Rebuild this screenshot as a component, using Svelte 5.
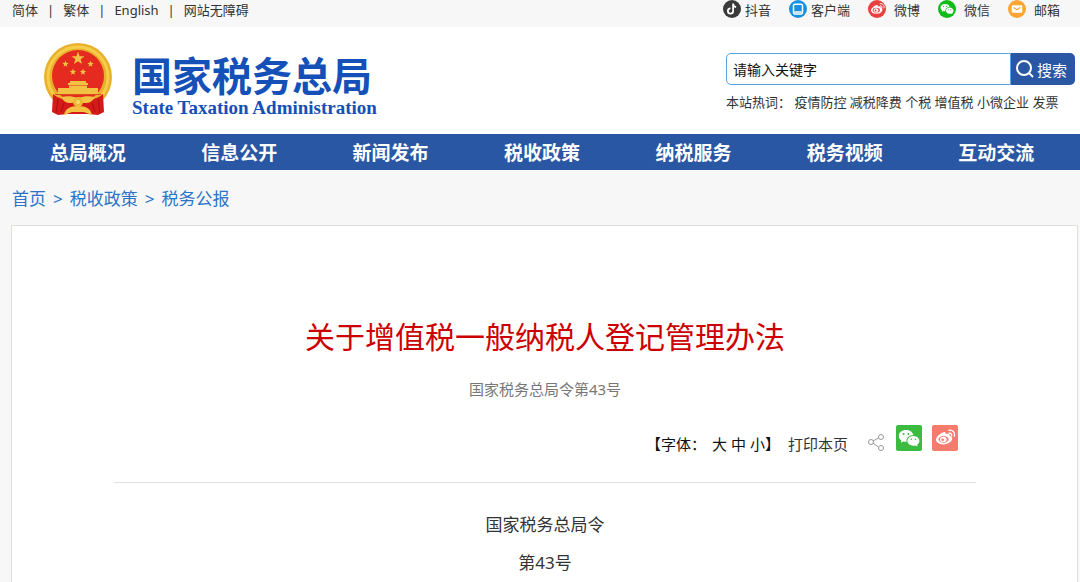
<script lang="ts">
  const languages = ['简体', '繁体', 'English', '网站无障碍'];

  const services = [
    { icon: 'douyin', label: '抖音' },
    { icon: 'app', label: '客户端' },
    { icon: 'weibo', label: '微博' },
    { icon: 'wechat', label: '微信' },
    { icon: 'mail', label: '邮箱' }
  ];

  const hotWords = ['疫情防控', '减税降费', '个税', '增值税', '小微企业', '发票'];

  const menu = ['总局概况', '信息公开', '新闻发布', '税收政策', '纳税服务', '税务视频', '互动交流'];

  const crumbs = ['首页', '税收政策', '税务公报'];

  const fontSizes = [
    { label: '大', px: 19 },
    { label: '中', px: 17 },
    { label: '小', px: 15 }
  ];

  let keyword = $state('请输入关键字');
  let bodySize = $state(17);
</script>

{#snippet wechatMark()}
  <path
    fill="#fff"
    fill-rule="evenodd"
    d="M10 5C5.8 5 2.8 7.6 2.8 10.9c0 1.9 1 3.5 2.6 4.6l-.7 2.3 2.7-1.4c.8.2 1.6.4 2.6.4h.6c-.8-4 2.7-6.9 6.7-6.9C16.7 7 13.7 5 10 5zM7.6 7.900a1 1 0 1 1 0 2 1 1 0 0 1 0-2zM12.4 7.900a1 1 0 1 1 0 2 1 1 0 0 1 0-2z"
  />
  <path
    fill="#fff"
    fill-rule="evenodd"
    d="M17.4 10.9c-3.4 0-6 2.200-6 4.900s2.600 4.900 6 4.900c.7 0 1.400-.1 2.100-.3l2.200 1.200-.6-1.900c1.400-.9 2.300-2.300 2.300-3.900 0-2.700-2.700-4.900-6-4.900zM15.4 13.500a.8.8 0 1 1 0 1.600.8.8 0 0 1 0-1.600zM19.4 13.500a.8.8 0 1 1 0 1.600.8.8 0 0 1 0-1.600z"
  />
{/snippet}

{#snippet weiboMark(inner: string)}
  <path
    fill="#fff"
    d="M10.4 7.2c1.5-.6 2.700-.1 2.300 1.900 2.300-.9 4.500-.6 3.900 1.600 1.700.6 2.600 1.600 2.600 2.900 0 3.200-4.100 5.800-8.700 5.800S3 17.200 3 14.500c0-2.600 4.200-6.300 7.400-7.300z"
  />
  <ellipse cx="10.600" cy="14.300" rx="5" ry="3.400" fill={inner} />
  <ellipse cx="10.300" cy="14.400" rx="3.300" ry="2.700" fill="#fff" />
  <circle cx="9.700" cy="14.800" r="1.300" fill={inner} />
  <path
    d="M16.300 8.300c1.500-.3 2.700.9 2.300 2.500M16 5.200c3.600-.6 6.400 2.300 5.500 6"
    fill="none"
    stroke="#fff"
    stroke-width="1.400"
    stroke-linecap="round"
  />
{/snippet}

<div class="page">
  <div class="topbar">
    <ul class="languages">
      {#each languages as language}
        <li><a href="#top">{language}</a></li>
      {/each}
    </ul>
    <ul class="services">
      {#each services as service}
        <li>
          <a href="#top">
            <svg class="service-icon" viewBox="0 0 24 24" aria-hidden="true">
              {#if service.icon === 'douyin'}
                <circle cx="12" cy="12" r="12" fill="#3a3a3a" />
                <path
                  d="M13.5 4.500v10.100a3.500 3.500 0 1 1-3.500-3.500M13.500 5.500c.3 2.300 1.900 3.700 4 3.900"
                  fill="none"
                  stroke="#fff"
                  stroke-width="2.400"
                />
              {:else if service.icon === 'app'}
                <circle cx="12" cy="12" r="12" fill="#1791e0" />
                <rect x="6" y="5.500" width="12" height="13" rx="2" fill="none" stroke="#fff" stroke-width="2" />
                <path d="M7 16h10" stroke="#fff" stroke-width="2" />
              {:else if service.icon === 'weibo'}
                <circle cx="12" cy="12" r="12" fill="#e9403f" />
                <g transform="translate(1 0) scale(0.950)">{@render weiboMark('#e9403f')}</g>
              {:else if service.icon === 'wechat'}
                <circle cx="12" cy="12" r="12" fill="#0fbb16" />
                <g transform="translate(1 1) scale(0.840)">{@render wechatMark()}</g>
              {:else}
                <circle cx="12" cy="12" r="12" fill="#fda532" />
                <rect x="5" y="7" width="14" height="10" rx="1.500" fill="#fff" />
                <path d="M7.500 10l4.500 3 4.500-3" fill="none" stroke="#fda532" stroke-width="1.500" />
              {/if}
            </svg>
            {service.label}
          </a>
        </li>
      {/each}
    </ul>
  </div>

  <header class="header">
    <a class="brand" href="#top">
      <svg class="emblem" viewBox="0 0 70 74" aria-hidden="true">
        <circle cx="34" cy="34" r="34" fill="#e9b02c" />
        <circle cx="34" cy="34" r="30" fill="none" stroke="#f6cd4a" stroke-width="3" />
        <circle cx="34" cy="33" r="26" fill="#e52b20" />
        <g fill="#f2c243">
          <path d="M34 8.500l1.600 4.700 4.900.1-3.900 3 1.400 4.700-4-2.800-4 2.800 1.400-4.700-3.900-3 4.900-.1z" />
          <path id="star" d="M21.500 17.500l.8 2.300 2.400.1-1.900 1.500.7 2.300-2-1.300-2 1.300.7-2.300-1.900-1.500 2.400-.1z" />
          <use href="#star" x="25" />
          <use href="#star" x="7.500" y="8" />
          <use href="#star" x="17.500" y="8" />
          <path d="M26 38h16v2h2v2H24v-2h2zM25 42.500h18v2.500h11v6H14v-6h11z" />
        </g>
        <path d="M11 51.500h46" stroke="#dc4a20" />
        <path d="M9 51c6 5 12 6 18 5l7 6 7-6c6 1 12 0 18-5l1 18-6 3-10-1H24l-10 1-6-3z" fill="#d61a18" />
        <path d="M17 54c7-1 10-1 17 1 7-2 10-2 17-1-3 6-9 8-17 4-8 4-14 2-17-4z" fill="#f3c244" />
        <circle cx="34" cy="59" r="5" fill="#eeb731" />
        <circle cx="34" cy="59" r="2" fill="#f9dc70" />
        <path d="M20 72c1-6 6-9 14-9s13 3 14 9l-8-3H28z" fill="#f3c244" />
        <path d="M14 56l-2 14M54 56l2 14M20 60l-3 9M48 60l3 9" stroke="#a80f12" />
      </svg>
      <span class="brand-text">
        <span class="brand-name">国家税务总局</span>
        <span class="brand-latin">State Taxation Administration</span>
      </span>
    </a>

    <form class="search" onsubmit={(e) => e.preventDefault()}>
      <div class="search-box">
        <input type="text" aria-label="搜索" bind:value={keyword} />
        <button type="submit">
          <svg class="search-icon" viewBox="0 0 18 18" aria-hidden="true">
            <circle cx="8" cy="8" r="7" />
            <path d="M13 13l4 4" />
          </svg>
          搜索
        </button>
      </div>
      <p class="hot">
        本站热词：
        {#each hotWords as word}
          <a href="#top">{word}</a>{' '}
        {/each}
      </p>
    </form>
  </header>

  <nav class="menu">
    {#each menu as item}
      <a href="#top">{item}</a>
    {/each}
  </nav>

  <nav class="crumbs">
    {#each crumbs as crumb, i}
      {#if i > 0}<span>&gt;</span>{/if}
      <a href="#top">{crumb}</a>
    {/each}
  </nav>

  <main class="article">
    <h1>关于增值税一般纳税人登记管理办法</h1>
    <p class="number">国家税务总局令第43号</p>

    <div class="tools">
      <div class="font-size">
        <span>【字体：</span>
        <div class="sizes">
          {#each fontSizes as size}
            <button onclick={() => (bodySize = size.px)}>{size.label}</button>
          {/each}
        </div>
        <span>】</span>
      </div>
      <button class="print" onclick={() => window.print()}>打印本页</button>
      <a class="share" href="#top" aria-label="分享">
        <svg class="share-icon" viewBox="0 0 16 18" aria-hidden="true">
          <path d="M5 8l5.500-3M5 10l5.500 4" />
          <circle cx="3" cy="9" r="2.500" />
          <circle cx="13" cy="4" r="2.500" />
          <circle cx="13" cy="15" r="2.500" />
        </svg>
      </a>
      <a class="share" href="#top" aria-label="微信">
        <svg class="share-tile" viewBox="0 0 26 26" aria-hidden="true">
          <rect width="26" height="26" rx="2" fill="#3bbb3f" />
          {@render wechatMark()}
        </svg>
      </a>
      <a class="share" href="#top" aria-label="微博">
        <svg class="share-tile" viewBox="0 0 26 26" aria-hidden="true">
          <rect width="26" height="26" rx="2" fill="#f67b6c" />
          <g transform="translate(1 0)">{@render weiboMark('#f67b6c')}</g>
        </svg>
      </a>
    </div>

    <div class="content" style="font-size: {bodySize}px">
      <p>国家税务总局令</p>
      <p>第43号</p>
    </div>
  </main>
</div>

<style>
  :global(body) {
    background: #f7f7f7;
  }
  .page {
    display: flex;
    flex-direction: column;
    min-height: 100vh;
    color: #333;
    font-family: 'Noto Sans', 'Noto Sans CJK SC', sans-serif;
    font-size: 13px;
  }
  a {
    color: inherit;
    text-decoration: none;
  }
  ul,
  p,
  h1 {
    margin: 0;
    padding: 0;
    list-style: none;
  }
  button {
    padding: 0;
    border: none;
    background: none;
    color: inherit;
    font: inherit;
    cursor: pointer;
  }
  svg {
    display: block;
  }

  .topbar {
    display: flex;
    justify-content: space-between;
    height: 27px;
    padding: 0 20px 0 12px;
    line-height: 20px;
  }
  .languages,
  .services {
    display: flex;
  }
  .languages li + li::before {
    content: '|';
    margin: 0 9px;
  }
  .services {
    gap: 18px;
  }
  .services a {
    display: flex;
    gap: 4px;
  }
  .services li:nth-child(n + 3) a {
    gap: 8px;
  }
  .service-icon {
    width: 18px;
    height: 18px;
  }

  .header {
    display: flex;
    justify-content: space-between;
    height: 107px;
    background: #fff;
  }
  .brand {
    display: flex;
    gap: 18px;
    padding: 16px 0 0 44px;
    color: #1450b8;
  }
  .emblem {
    width: 70px;
    height: 74px;
  }
  .brand-text {
    display: flex;
    flex-direction: column;
    padding-top: 11px;
  }
  .brand-name {
    font-size: 40px;
    font-weight: 700;
    line-height: 44px;
  }
  .brand-latin {
    font-family: 'Liberation Serif', serif;
    font-size: 19px;
    font-weight: 700;
    line-height: 20px;
  }
  .search {
    width: 349px;
    padding: 26px 5px 0 0;
  }
  .search-box {
    display: flex;
    height: 32px;
  }
  .search-box input {
    flex: 1;
    min-width: 0;
    box-sizing: border-box;
    padding: 0 6px;
    border: 1px solid #55a3e6;
    border-radius: 5px 0 0 5px;
    color: #111;
    font: inherit;
    font-size: 14px;
    outline: none;
  }
  .search-box button {
    display: flex;
    align-items: center;
    gap: 3px;
    padding: 0 8px 0 5px;
    border-radius: 0 5px 5px 0;
    background: #2957a4;
    color: #fff;
    font-size: 15px;
  }
  .search-icon {
    width: 18px;
    height: 18px;
    fill: none;
    stroke: #fff;
    stroke-width: 2;
  }
  .hot {
    line-height: 34px;
    white-space: nowrap;
  }

  .menu {
    display: grid;
    grid-template-columns: repeat(7, 1fr);
    padding: 2px 8px 0 12px;
    background: #2957a4;
    color: #fff;
    font-size: 19px;
    font-weight: 700;
    line-height: 34px;
    text-align: center;
  }
  .crumbs {
    display: flex;
    gap: 7px;
    padding: 15px 12px 12px;
    color: #2b74c8;
    font-size: 17px;
    line-height: 28px;
  }

  .article {
    flex: 1;
    margin: 0 2px 0 11px;
    padding: 87px 101px 0 102px;
    border: 1px solid #dfdfda;
    border-bottom: none;
    background: #fff;
    text-align: center;
  }
  h1 {
    color: #c00;
    font-size: 30px;
    font-weight: 400;
    line-height: 48px;
  }
  .number {
    margin-top: 16px;
    color: #777;
    font-size: 15px;
    line-height: 24px;
  }
  .tools {
    display: flex;
    align-items: flex-end;
    justify-content: flex-end;
    margin-top: 24px;
    padding: 0 18px 26px 0;
    border-bottom: 1px solid #e0e0dc;
    font-size: 15px;
    line-height: 24px;
  }
  .font-size {
    display: flex;
    color: #111;
  }
  .sizes {
    display: flex;
    gap: 4px;
    margin-left: 6px;
  }
  .print {
    margin: 0 20px 0 8px;
  }
  .share {
    padding-bottom: 5px;
  }
  .share + .share {
    margin-left: 10px;
  }
  .share-icon {
    width: 16px;
    height: 18px;
    margin-right: 2px;
    fill: none;
    stroke: #999;
  }
  .share-tile {
    width: 26px;
    height: 26px;
  }
  .content {
    padding-top: 23px;
    line-height: 38px;
  }
</style>
